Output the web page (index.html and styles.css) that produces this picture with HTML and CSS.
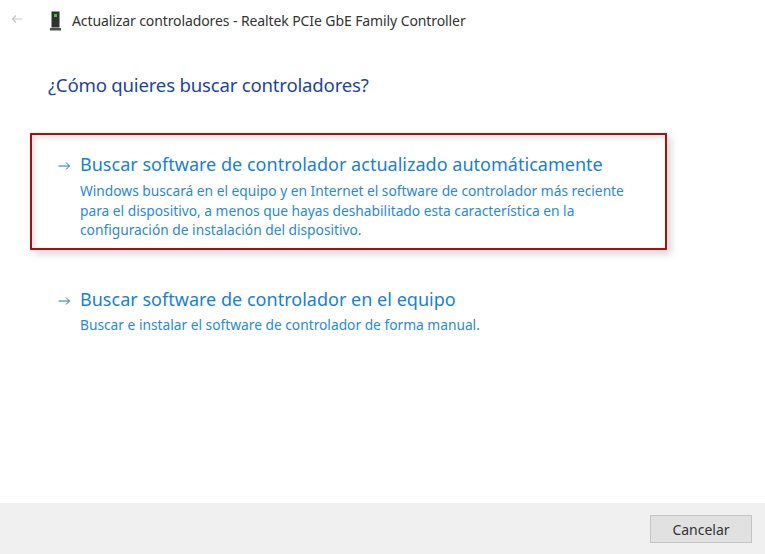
FILE: index.html
```html
<!DOCTYPE html>
<html lang="es">
<head>
  <meta charset="UTF-8" />
  <title>Actualizar controladores</title>
  <link rel="stylesheet" href="styles.css">
</head>
<body>
  <div class="dialog">
    <div class="titlebar">
      <svg class="back" width="12" height="10" viewBox="0 0 12 10">
        <path d="M11 5H1.5M5 1.5L1.5 5L5 8.5" fill="none" stroke="#c4c4c4" stroke-width="1.2" />
      </svg>
      <svg class="device" width="12" height="20" viewBox="0 0 12 20">
        <rect x="1.5" y="0.5" width="8" height="16" fill="#2f3231" />
        <rect x="0" y="17" width="11" height="2.5" fill="#4c4f4e" />
        <rect x="4" y="3" width="3" height="3" fill="#3fc24f" />
      </svg>
      <span class="title">Actualizar controladores - Realtek PCIe GbE Family Controller</span>
    </div>

    <div class="content">
      <h1>¿Cómo quieres buscar controladores?</h1>

      <div class="option option-marked">
        <span class="arrow">
          <svg width="13" height="10" viewBox="0 0 13 10">
            <path d="M0.5 5H11.5M8 1.5L11.5 5L8 8.5" fill="none" stroke="#0a78d0" stroke-width="1" />
          </svg>
        </span>
        <div class="option-text">
          <h2>Buscar software de controlador actualizado automáticamente</h2>
          <p>Windows buscará en el equipo y en Internet el software de controlador más reciente<br>para el dispositivo, a menos que hayas deshabilitado esta característica en la<br>configuración de instalación del dispositivo.</p>
        </div>
      </div>

      <div class="option">
        <span class="arrow">
          <svg width="13" height="10" viewBox="0 0 13 10">
            <path d="M0.5 5H11.5M8 1.5L11.5 5L8 8.5" fill="none" stroke="#0a78d0" stroke-width="1" />
          </svg>
        </span>
        <div class="option-text">
          <h2>Buscar software de controlador en el equipo</h2>
          <p>Buscar e instalar el software de controlador de forma manual.</p>
        </div>
      </div>
    </div>

    <div class="footer">
      <button class="cancel">Cancelar</button>
    </div>
  </div>
</body>
</html>
```
FILE: styles.css
```css
html, body {
  margin: 0;
  height: 100%;
}
body {
  font-family: "Noto Sans", "Open Sans", sans-serif;
  background-color: #fff;
  overflow: hidden;
}
.dialog {
  height: 554px;
  display: flex;
  flex-direction: column;
}
.titlebar {
  height: 41px;
  display: flex;
  align-items: center;
  padding-left: 11px;
}
.back {
  margin-right: 27px;
  margin-top: -3px;
}
.device {
  margin-right: 10px;
}
.title {
  font-size: 14px;
  color: #333;
  letter-spacing: -0.1px;
}
.content {
  flex: 1;
  padding: 30px 0 0 30px;
}
h1 {
  margin: 0 0 35px 18px;
  font-size: 18.6px;
  line-height: 27px;
  font-weight: 400;
  color: #1c459f;
  letter-spacing: -0.2px;
}
.option {
  display: flex;
}
.option-marked {
  box-sizing: border-box;
  width: 637px;
  height: 117px;
  margin-bottom: 36px;
  padding: 16px 0 0 26px;
  border: 2px solid #a80f14;
  box-shadow: 4px 4px 7px rgba(120, 120, 130, 0.3), inset 3px 3px 5px rgba(130, 130, 130, 0.22);
}
.option:not(.option-marked) {
  padding-left: 28px;
}
.arrow {
  width: 22px;
  flex: none;
  padding-top: 3px;
}
h2 {
  margin: 0;
  font-size: 18px;
  line-height: 26px;
  font-weight: 400;
  color: #1880d6;
  letter-spacing: 0.02px;
}
p {
  margin: 3px 0 0;
  font-size: 13.75px;
  line-height: 19.5px;
  color: #2a88da;
}
.option-marked p {
  margin-top: 4px;
}
.footer {
  height: 51px;
  background-color: #f0f0f0;
  display: flex;
  justify-content: flex-end;
  align-items: flex-start;
  padding: 12px 13px 0 0;
  box-sizing: border-box;
}
.cancel {
  width: 102px;
  height: 28px;
  font-family: inherit;
  font-size: 14px;
  color: #333;
  background-color: #e1e1e1;
  border: 1px solid #c4c4c4;
  padding: 0;
}
```
